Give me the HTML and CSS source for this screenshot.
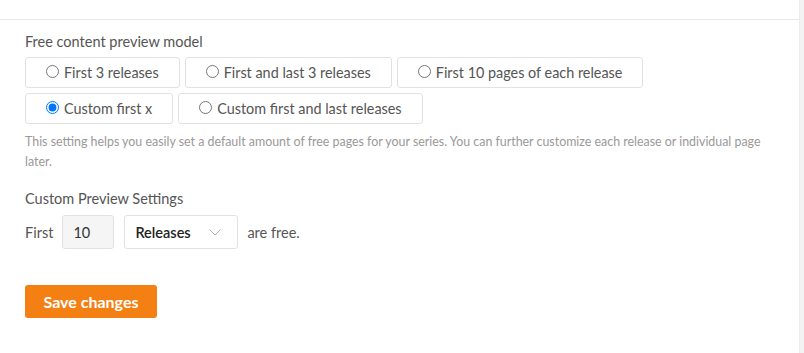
FILE: index.html
```html
<!DOCTYPE html>
<html lang="en">

<head>
    <meta charset="UTF-8">
    <meta name="viewport" content="width=device-width, initial-scale=1.0">
    <title>Preview settings</title>
    <link rel="stylesheet" href="styles.css">
</head>

<body>
    <div class="page">
        <div class="topbar"></div>

        <div class="content">
            <div class="field-label">Free content preview model</div>

            <!-- Preview model choices -->
            <div class="options">
                <label class="option"><input type="radio" name="model"> First 3 releases</label>
                <label class="option"><input type="radio" name="model"> First and last 3 releases</label>
                <label class="option"><input type="radio" name="model"> First 10 pages of each release</label>
                <label class="option"><input type="radio" name="model" checked> Custom first x</label>
                <label class="option"><input type="radio" name="model"> Custom first and last releases</label>
            </div>

            <p class="help">This setting helps you easily set a default amount of free pages for your series. You can further customize each release or individual page later.</p>

            <div class="field-label section">Custom Preview Settings</div>
            <div class="custom-row">
                <span>First</span>
                <input class="count" type="text" value="10">
                <div class="select">
                    <span>Releases</span>
                    <svg width="12" height="7" viewBox="0 0 12 7">
                        <polyline points="0.5,0.5 6,6 11.5,0.5" fill="none" stroke="#b5b5b5" stroke-width="1"/>
                    </svg>
                </div>
                <span>are free.</span>
            </div>

            <button class="save-btn">Save changes</button>
        </div>
    </div>

    <div class="strip"></div>
</body>

</html>
```

FILE: styles.css
```css
body {
    margin: 0;
    font-family: Lato, "Liberation Sans", sans-serif;
    background-color: #fff;
    color: #555;
    display: flex;
    min-height: 353px;
}

.page {
    flex: 1;
}

.strip {
    width: 4px;
    background-color: #f3f3f3;
    border-left: 1px solid #ececec;
}

.topbar {
    height: 19px;
    border-bottom: 1px solid #e8e8e8;
}

.content {
    padding: 12px 25px 20px;
}

.field-label {
    font-size: 14.5px;
    line-height: 20px;
    color: #555;
}

.field-label.section {
    margin-top: 17px;
}

.options {
    display: flex;
    flex-wrap: wrap;
    gap: 5px;
    margin-top: 5px;
}

.option {
    display: flex;
    align-items: center;
    height: 29px;
    padding: 0 20px;
    border: 1px solid #e2e2e2;
    border-radius: 3px;
    font-size: 14.4px;
    color: #555;
}

.option input {
    width: 13px;
    height: 13px;
    margin: 0 5px 3px 0;
}

.help {
    margin: 8px 0 0;
    font-size: 12.4px;
    line-height: 20px;
    color: #999;
}

.custom-row {
    display: flex;
    align-items: center;
    margin-top: 6px;
    font-size: 14.5px;
    color: #555;
}

.count {
    box-sizing: border-box;
    height: 34px;
    width: 52px;
    margin-left: 9px;
    padding: 0 10px;
    border: 1px solid #e2e2e2;
    border-radius: 3px;
    background-color: #f5f5f5;
    font-family: inherit;
    font-size: 14.5px;
    color: #333;
}

.select {
    display: flex;
    align-items: center;
    justify-content: space-between;
    box-sizing: border-box;
    width: 114px;
    height: 34px;
    margin: 0 9px 0 10px;
    padding: 0 16px 0 10px;
    border: 1px solid #e2e2e2;
    border-radius: 3px;
    font-weight: 600;
    color: #222;
}

.save-btn {
    display: block;
    margin-top: 36px;
    width: 132px;
    height: 33px;
    border: none;
    border-radius: 3px;
    background-color: #f47f13;
    color: #fff;
    font-family: inherit;
    font-size: 16px;
    font-weight: 700;
}
```
